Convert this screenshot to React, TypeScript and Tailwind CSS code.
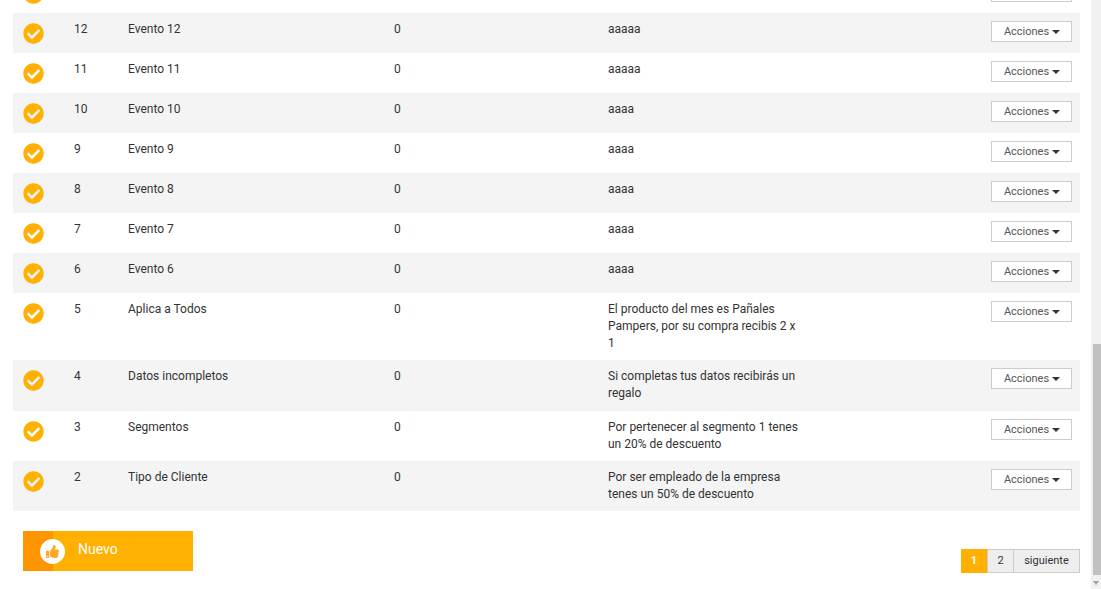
import { FaCheckCircle, FaThumbsUp } from "react-icons/fa";

const rows = [
  { id: "12", name: "Evento 12", text: ["aaaaa"], h: "h-10" },
  { id: "11", name: "Evento 11", text: ["aaaaa"], h: "h-10" },
  { id: "10", name: "Evento 10", text: ["aaaa"], h: "h-10" },
  { id: "9", name: "Evento 9", text: ["aaaa"], h: "h-10" },
  { id: "8", name: "Evento 8", text: ["aaaa"], h: "h-10" },
  { id: "7", name: "Evento 7", text: ["aaaa"], h: "h-10" },
  { id: "6", name: "Evento 6", text: ["aaaa"], h: "h-10" },
  {
    id: "5",
    name: "Aplica a Todos",
    text: ["El producto del mes es Pañales", "Pampers, por su compra recibis 2 x", "1"],
    h: "h-[67px]",
  },
  { id: "4", name: "Datos incompletos", text: ["Si completas tus datos recibirás un", "regalo"], h: "h-[51px]" },
  { id: "3", name: "Segmentos", text: ["Por pertenecer al segmento 1 tenes", "un 20% de descuento"], h: "h-[50px]" },
  { id: "2", name: "Tipo de Cliente", text: ["Por ser empleado de la empresa", "tenes un 50% de descuento"], h: "h-[50px]" },
];

const StatusIcon = () => <FaCheckCircle size={21} className="text-[#ffb000]" />;

export default function App() {
  return (
    <div className="relative h-[589px] w-[1101px] overflow-hidden bg-white font-['Roboto',sans-serif] text-xs text-[#333]">
      {/* Row scrolled past the top: only the foot of its icon and button shows */}
      <div className="ml-[13px] flex h-[13px] w-[1067px] items-start justify-between overflow-hidden">
        <div className="-mt-[17px] pl-[9.5px]">
          <StatusIcon />
        </div>
        <div className="-mt-[19px] mr-2 h-[21px] w-[81px] border border-[#ccc] bg-white" />
      </div>

      {/* Table */}
      <div className="ml-[13px] w-[1067px]">
        {rows.map((row, i) => (
          <div key={row.id} className={`flex ${row.h} ${i % 2 === 0 ? "bg-[#f4f4f4]" : "bg-white"}`}>
            <div className="w-[61px] pl-[9.5px] pt-2.5">
              <StatusIcon />
            </div>
            <div className="w-[54px] pt-2 leading-4">{row.id}</div>
            <div className="w-[266px] pt-2 leading-4">{row.name}</div>
            <div className="w-[214px] pt-2 leading-4">0</div>
            <div className="w-[198px] pt-2 leading-[17px]">
              {row.text.map((t) => (
                <div key={t} className="whitespace-nowrap">{t}</div>
              ))}
            </div>
            <div className="flex flex-1 justify-end pr-2 pt-2">
              <button className="flex h-[21px] w-[81px] items-center justify-center gap-[3px] border border-[#ccc] bg-white pt-px pl-px text-[11px] text-[#555]">
                Acciones
                <span className="h-0 w-0 border-x-4 border-t-4 border-x-transparent border-t-[#333]" />
              </button>
            </div>
          </div>
        ))}
      </div>

      {/* Footer */}
      <div className="ml-[13px] flex w-[1067px] items-start justify-between">
        <button className="ml-2.5 mt-5 flex h-10 w-[170px] items-center bg-[#ffb000] text-sm text-white">
          <span className="flex h-10 w-[30px] shrink-0 bg-[#ff9600]" />
          <span className="-ml-[13px] flex h-[25px] w-[25px] items-center justify-center rounded-full bg-white">
            <FaThumbsUp size={13} className="text-[#ffa726]" />
          </span>
          <span className="mb-1 ml-[13px]">Nuevo</span>
        </button>
        <div className="mt-[38px] flex h-6 text-[11px]">
          <span className="flex w-[26px] items-center justify-center bg-[#ffb000] font-bold text-white">1</span>
          <span className="flex w-[27px] items-center justify-center border border-[#ccc] bg-[#eee]">2</span>
          <span className="flex w-[66px] items-center justify-center border border-l-0 border-[#ccc] bg-[#eee]">siguiente</span>
        </div>
      </div>

      {/* Scrollbar */}
      <div className="absolute right-0 top-0 h-full w-[10px] bg-[#f1f1f1]">
        <div className="absolute left-[2px] right-0 top-[344px] h-[231px] bg-[#c1c1c1]" />
        <div className="absolute bottom-[4px] left-[2px] h-0 w-0 border-x-[3px] border-t-[4px] border-x-transparent border-t-[#a3a3a3]" />
      </div>
    </div>
  );
}
